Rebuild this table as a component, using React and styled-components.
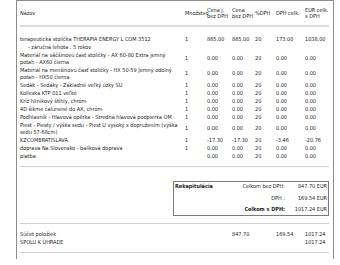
import React from "react";
import styled, { createGlobalStyle } from "styled-components";

const COLS = "165px 22px 25px 23px 21px 29px 1fr";

const GlobalStyle = createGlobalStyle`
  body {
    margin: 0;
    background: #fff;
    font-family: "DejaVu Sans Condensed", "DejaVu Sans", Verdana, sans-serif;
    color: #1e1e1e;
  }
`;

const Page = styled.div`
  padding-left: 16px;
`;

const Sheet = styled.div`
  box-sizing: border-box;
  width: 318px;
  height: 259px;
  border: 1px solid #8c8c8c;
  border-bottom: none;
  padding: 0 4px 0 3px;
  font-size: 5.5px;
`;

const HeadRow = styled.div`
  display: grid;
  grid-template-columns: ${COLS};
  align-items: center;
  height: 24px;
  line-height: 6px;
  border-bottom: 2px solid #dcdcdc;
`;

const Body = styled.div`
  padding: 8px 0 6px;
`;

const Row = styled.div`
  display: grid;
  grid-template-columns: ${COLS};
  align-items: center;
  padding: 0.5px 0;
  line-height: 7px;
`;

const Name = styled.div`
  white-space: nowrap;
  padding-left: ${(p) => (p.$sub ? "8px" : "0")};
`;

const Cell = styled.div`
  white-space: nowrap;
`;

const Divider = styled.div`
  height: 1px;
  background: #d0d0d0;
`;

const Recap = styled.div`
  box-sizing: border-box;
  width: 156px;
  margin: 14px 0 7px auto;
  border: 1px solid #7a7a7a;
  padding: 0 1px 2px 1px;
  display: grid;
  grid-template-columns: 52px 55px 1fr;
  column-gap: 3px;
  row-gap: 3.5px;
  line-height: 8px;
`;

const RecapTitle = styled.div`
  font-weight: bold;
`;

const RecapLabel = styled.div`
  text-align: right;
  white-space: nowrap;
  font-weight: ${(p) => (p.$strong ? "bold" : "normal")};
`;

const RecapValue = styled.div`
  text-align: right;
  white-space: nowrap;
`;

const Summary = styled.div`
  padding: 6px 0 6px;
`;

const SumRow = styled.div`
  display: grid;
  grid-template-columns: ${COLS};
  line-height: 8px;
`;

const zeros = ["0.00", "0.00", "20", "0.00", "0.00"];

const items = [
  { name: ["terapeutická stolička THERAPIA ENERGY L COM 3512"], q: "1", v: ["865.00", "865.00", "20", "173.00", "1038.00"] },
  { name: ["- záručná lehota : 5 rokov"], sub: true },
  { name: ["Materiál na väčšinovú časť stoličky - AX 60-80 Extra jemný", "potah - AX60 čierna"], q: "1", v: zeros },
  { name: ["Materiál na menšinovú časť stoličky - HX 50-59 Jemný odolný", "potah - HX50 čierna"], q: "1", v: zeros },
  { name: ["Sedák - Sedáky - Základné veľký úzky SU"], q: "1", v: zeros },
  { name: ["Kolieska KTP 011 veľké"], q: "1", v: zeros },
  { name: ["Kríž hliníkový štíhly, chróm"], q: "1", v: zeros },
  { name: ["4D šikmé čalúnené do AX, chróm"], q: "1", v: zeros },
  { name: ["Podhlavník - Hlavová opěrka - Stredná hlavová podpierka OM"], q: "1", v: zeros },
  { name: ["Piest - Piesty / výška sedu - Piest U vysoký s dopružením (výška", "sedu 57-68cm)"], q: "1", v: zeros },
  { name: ["KZCOMBRATISLAVA"], q: "1", v: ["-17.30", "-17.30", "20", "-3.46", "-20.76"] },
  { name: ["doprava Na Slovensko - balíková doprava"], q: "1", v: zeros },
  { name: ["platba"], q: "", v: zeros },
];

export default function App() {
  return (
    <Page>
      <GlobalStyle />
      <Sheet>
        <HeadRow>
          <Cell>Názov</Cell>
          <Cell>Množstvo</Cell>
          <Cell>Cena j.<br />bez DPH</Cell>
          <Cell>Cena<br />bez DPH</Cell>
          <Cell>%DPH</Cell>
          <Cell>DPH celk.</Cell>
          <Cell>EUR celk.<br />s DPH</Cell>
        </HeadRow>
        <Body>
          {items.map((it, i) => (
            <Row key={i}>
              <Name $sub={it.sub}>
                {it.name.map((line, k) => (
                  <div key={k}>{line}</div>
                ))}
              </Name>
              <Cell>{it.q}</Cell>
              {(it.v || []).map((x, j) => (
                <Cell key={j}>{x}</Cell>
              ))}
            </Row>
          ))}
        </Body>
        <Divider />
        <Recap>
          <RecapTitle>Rekapitulácia</RecapTitle>
          <RecapLabel>Celkom bez DPH:</RecapLabel>
          <RecapValue>847.70 EUR</RecapValue>
          <div />
          <RecapLabel>DPH :</RecapLabel>
          <RecapValue>169.54 EUR</RecapValue>
          <div />
          <RecapLabel $strong>Celkom s DPH:</RecapLabel>
          <RecapValue>1017.24 EUR</RecapValue>
        </Recap>
        <Divider />
        <Summary>
          <SumRow>
            <Cell>Súčet položiek</Cell>
            <div />
            <div />
            <Cell>847.70</Cell>
            <div />
            <Cell>169.54</Cell>
            <Cell>1017.24</Cell>
          </SumRow>
          <SumRow>
            <Cell>SPOLU K ÚHRADE</Cell>
            <div />
            <div />
            <div />
            <div />
            <div />
            <Cell>1017.24</Cell>
          </SumRow>
        </Summary>
        <Divider />
      </Sheet>
    </Page>
  );
}
